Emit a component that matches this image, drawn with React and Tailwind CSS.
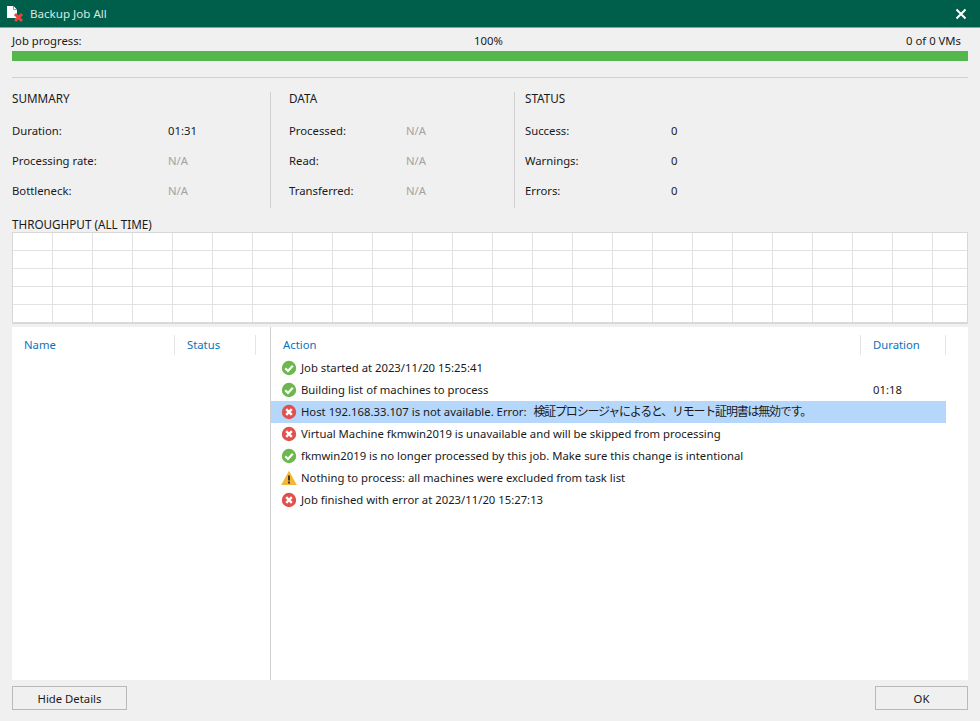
const F = "font-['Noto_Sans','Noto_Sans_CJK_JP',sans-serif]";

function Ok() {
  return (
    <svg width="16" height="16" viewBox="0 0 16 16" className="shrink-0">
      <circle cx="8" cy="8" r="7.2" fill="#6cb84f" />
      <path d="M4.2 8.2 7 11 11.8 5.8" fill="none" stroke="#fff" strokeWidth="2.2" />
    </svg>
  );
}
function Err() {
  return (
    <svg width="16" height="16" viewBox="0 0 16 16" className="shrink-0">
      <circle cx="8" cy="8" r="7.2" fill="#e2504c" />
      <path d="M5.2 5.2 10.8 10.8M10.8 5.2 5.2 10.8" fill="none" stroke="#fff" strokeWidth="2.4" />
    </svg>
  );
}
function Warn() {
  return (
    <svg width="16" height="16" viewBox="0 0 16 16" className="shrink-0">
      <path d="M8 .8 15.8 15H.2Z" fill="#f5b536" />
      <path d="M8 5.5V10.5M8 11.6V13.6" fill="none" stroke="#222" strokeWidth="1.7" />
    </svg>
  );
}

function Stat({ title, rows, w, valueX, border }) {
  return (
    <div className={`flex flex-col ${w} ${border ? "border-r border-[#d0d0d0]" : ""}`}>
      <div className="h-[32px] shrink-0 leading-[12px] text-[11.7px]">{title}</div>
      <div className="flex flex-col gap-[16px]">
        {rows.map(([k, v]) => (
          <div key={k} className="flex h-[14px] leading-[14px]">
            <span className={valueX}>{k}</span>
            <span className={v === "N/A" ? "text-[#a3a3a3]" : ""}>{v}</span>
          </div>
        ))}
      </div>
    </div>
  );
}

const logs = [
  [Ok, "Job started at 2023/11/20 15:25:41", ""],
  [Ok, "Building list of machines to process", "01:18"],
  [Err, "Host 192.168.33.107 is not available. Error:", "", "検証プロシージャによると、リモート証明書は無効です。"],
  [Err, "Virtual Machine fkmwin2019 is unavailable and will be skipped from processing", ""],
  [Ok, "fkmwin2019 is no longer processed by this job. Make sure this change is intentional", ""],
  [Warn, "Nothing to process: all machines were excluded from task list", ""],
  [Err, "Job finished with error at 2023/11/20 15:27:13", ""],
];

export default function App() {
  const vs = Array.from({ length: 23 }, (_, i) => 40 * (i + 1));
  const hs = [18, 36, 54, 72];
  return (
    <div className={`${F} w-[980px] h-[721px] bg-[#f0f0f0] text-[11.3px] text-[#1a1a1a] flex flex-col overflow-hidden`}>
      <div className="h-[28px] shrink-0 bg-[#005f4b] border-b border-[#9a9a9a] flex items-center pl-[7px] pr-[13px]">
        <svg width="18" height="18" viewBox="0 0 18 18" className="shrink-0">
          <path d="M0 1H6.5L10 4.5V13H0Z" fill="#fff" />
          <path d="M6.5 1V4.5H10" fill="none" stroke="#8a9a96" />
          <path d="M8 9 15 16M15 9 8 16" fill="none" stroke="#e8453c" strokeWidth="3" />
        </svg>
        <span className="ml-[5px] text-[#d6e8e2] flex-1 leading-none text-[11.6px]">Backup Job All</span>
        <svg width="12" height="12" viewBox="0 0 12 12">
          <path d="M1.5 1.5 10.5 10.5M10.5 1.5 1.5 10.5" stroke="#fff" strokeWidth="2" />
        </svg>
      </div>

      <div className="px-[12px] flex flex-col flex-1 min-h-0">
        <div className="flex justify-between h-[16px] mt-[6px] pr-[7px] leading-[14px] relative">
          <span>Job progress:</span>
          <span className="absolute left-[462px]">100%</span>
          <span>0 of 0 VMs</span>
        </div>
        <div className="h-[10px] mt-[1px] bg-[#54b74b]" />
        <div className="h-px mt-[16px] bg-[#d0d0d0]" />

        <div className="flex mt-[14px] h-[116px]">
          <Stat title="SUMMARY" w="w-[259px]" valueX="w-[156px]" border rows={[["Duration:", "01:31"], ["Processing rate:", "N/A"], ["Bottleneck:", "N/A"]]} />
          <div className="w-[18px]" />
          <Stat title="DATA" w="w-[226px]" valueX="w-[117px]" border rows={[["Processed:", "N/A"], ["Read:", "N/A"], ["Transferred:", "N/A"]]} />
          <div className="w-[10px]" />
          <Stat title="STATUS" w="w-[200px]" valueX="w-[146px]" rows={[["Success:", "0"], ["Warnings:", "0"], ["Errors:", "0"]]} />
        </div>

        <div className="mt-[10px] h-[14px] leading-[12px] text-[11.7px]">THROUGHPUT (ALL TIME)</div>
        <div className="h-[92px] shrink-0 bg-white border border-[#d8d8d8] border-b-2">
          <svg width="954" height="89" className="block">
            {vs.map((x) => (
              <line key={x} x1={x - 0.5} x2={x - 0.5} y1="0" y2="89" stroke="#e2e2e2" />
            ))}
            {hs.map((y) => (
              <line key={y} y1={y - 0.5} y2={y - 0.5} x1="0" x2="954" stroke="#e2e2e2" />
            ))}
          </svg>
        </div>

        <div className="mt-[3px] h-[353px] bg-white flex">
          <div className="w-[259px] shrink-0 border-r border-[#d0d0d0] h-full">
            <div className="flex h-[20px] mt-[8px] text-[#0b72bd] leading-[20px]">
              <span className="w-[163px] pl-[12px] border-r border-[#e5e5e5]">Name</span>
              <span className="w-[81px] pl-[12px] border-r border-[#e5e5e5]">Status</span>
            </div>
          </div>
          <div className="flex-1 min-w-0 flex flex-col">
            <div className="flex h-[20px] mt-[8px] text-[#0b72bd] leading-[20px] w-[675px]">
              <span className="w-[590px] pl-[12px] border-r border-[#e5e5e5]">Action</span>
              <span className="flex-1 pl-[12px] border-r border-[#e5e5e5]">Duration</span>
            </div>
            <div className="mt-[2px] w-[675px] flex flex-col">
              {logs.map(([Icon, text, dur, cjk]) => (
                <div key={text} className={`flex items-center h-[22px] pl-[10px] ${cjk ? "bg-[#b5d7fb]" : ""}`}>
                  <Icon />
                  <span className="ml-[3px] pl-[1px] w-[572px] whitespace-nowrap">
                    {text}
                    {cjk && <span className="text-[12px] ml-[7px] tracking-[-1.22px]">{cjk}</span>}
                  </span>
                  <span className="ml-[1px]">{dur}</span>
                </div>
              ))}
            </div>
          </div>
        </div>

        <div className="flex justify-between mt-[6px]">
          <button className="w-[115px] h-[24px] border border-[#b9b9b9] bg-[#f0f0f0] leading-none pt-[1px]">Hide Details</button>
          <button className="w-[93px] h-[24px] border border-[#b9b9b9] bg-[#f0f0f0] leading-none pt-[1px]">OK</button>
        </div>
      </div>
    </div>
  );
}
